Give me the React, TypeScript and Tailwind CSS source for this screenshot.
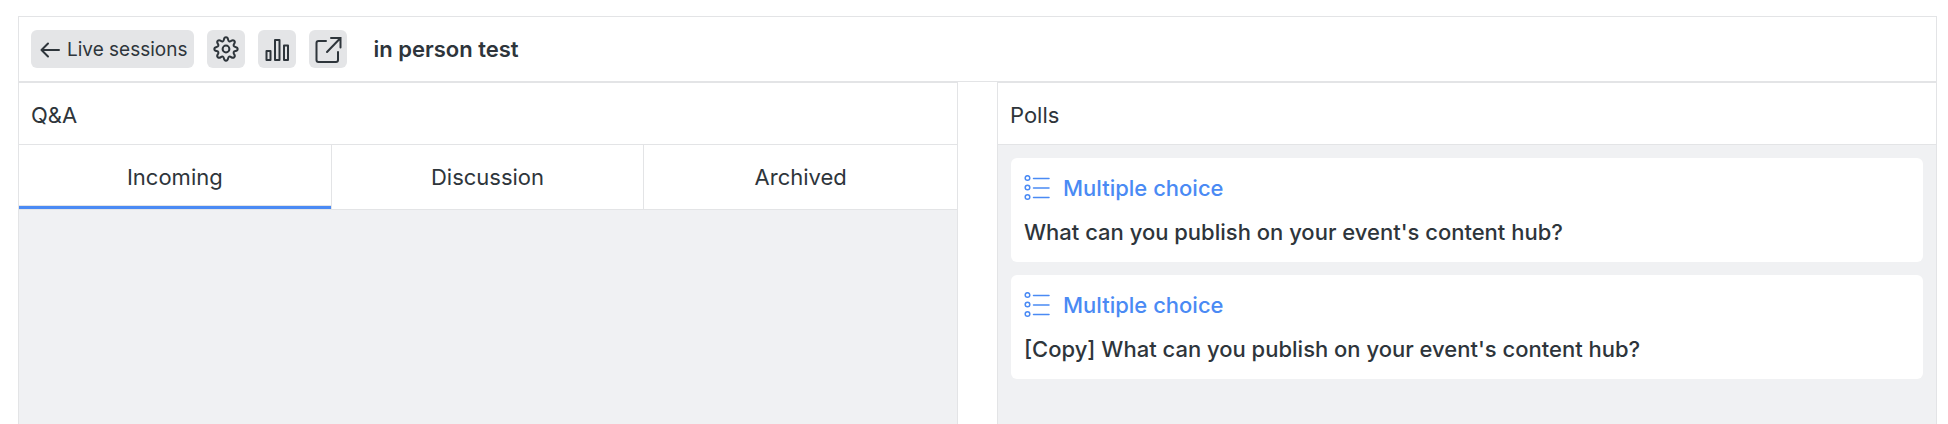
import type { ReactNode } from "react";

const tabs = ["Incoming", "Discussion", "Archived"];

const polls = [
  { type: "Multiple choice", question: "What can you publish on your event's content hub?" },
  { type: "Multiple choice", question: "[Copy] What can you publish on your event's content hub?" },
];

function ArrowLeftIcon() {
  return (
    <svg width="20" height="20" viewBox="0 0 20 20" fill="none" stroke="currentColor" strokeWidth="2" strokeLinecap="round" strokeLinejoin="round">
      <path d="M19 10H1.5M8 3.5 1.5 10 8 16.5" />
    </svg>
  );
}

function GearIcon() {
  return (
    <svg width="26" height="26" viewBox="0 0 26 26" fill="none" stroke="currentColor" strokeWidth="2" strokeLinejoin="round">
      <circle cx="13" cy="13" r="3.4" />
      <path d="M10.9 3.6C11.4 .6 14.6 .6 15.1 3.6C15.4 5.4 16.6 5.9 18.1 4.9C20.6 3.1 22.9 5.4 21.1 7.9C20.1 9.4 20.6 10.6 22.4 10.9C25.4 11.4 25.4 14.6 22.4 15.1C20.6 15.4 20.1 16.6 21.1 18.1C22.9 20.6 20.6 22.9 18.1 21.1C16.6 20.1 15.4 20.6 15.1 22.4C14.6 25.4 11.4 25.4 10.9 22.4C10.6 20.6 9.4 20.1 7.9 21.1C5.4 22.9 3.1 20.6 4.9 18.1C5.9 16.6 5.4 15.4 3.6 15.1C.6 14.6 .6 11.4 3.6 10.9C5.4 10.6 5.9 9.4 4.9 7.9C3.1 5.4 5.4 3.1 7.9 4.9C9.4 5.9 10.6 5.4 10.9 3.6Z" />
    </svg>
  );
}

function ChartIcon() {
  return (
    <svg width="26" height="26" viewBox="0 0 26 26" fill="none" stroke="currentColor" strokeWidth="2" strokeLinejoin="round">
      <path d="M2.5 15h4v9h-4zM11 4h4.500v20H11zM20 9.500h4V24h-4z" />
    </svg>
  );
}

function ExternalIcon() {
  return (
    <svg width="28" height="28" viewBox="0 0 28 28" fill="none" stroke="currentColor" strokeWidth="2" strokeLinecap="round">
      <path d="M12 6H4.5a2 2 0 0 0-2 2v17a2 2 0 0 0 2 2h17.500a2 2 0 0 0 2-2v-8M17 3h9.500v9.500M26 3.500 13 17" />
    </svg>
  );
}

function ChoiceIcon() {
  return (
    <svg width="26" height="26" viewBox="0 0 26 26" fill="none" stroke="currentColor" strokeWidth="1.5" strokeLinecap="round">
      <circle cx="3.5" cy="3" r="2.3" />
      <circle cx="3.5" cy="12.5" r="2.3" />
      <circle cx="3.5" cy="22" r="2.3" />
      <path d="M9.500 3.500H25M9.500 13H25M9.500 22.500H25" />
    </svg>
  );
}

function IconButton({ label, children }: { label: string; children: ReactNode }) {
  return (
    <button type="button" aria-label={label} className="flex size-[38px] items-center justify-center rounded-md bg-[#e4e5e7]">
      {children}
    </button>
  );
}

function Panel({ title, children }: { title: string; children: ReactNode }) {
  return (
    <section className="flex flex-col border-x border-t border-[#e3e4e6] bg-[#f0f1f3]">
      <h2 className="border-b border-[#e3e4e6] bg-white px-3 pt-[18px] pb-[15px] text-[22px] leading-7">{title}</h2>
      {children}
    </section>
  );
}

export default function App() {
  return (
    <div className="flex min-h-screen flex-col bg-white pt-4 pr-[11px] pl-[18px] font-['Inter',sans-serif] text-[#2e353b]">
      <header className="flex items-center gap-[13px] border border-[#e3e4e6] px-3 py-[13px]">
        <a href="#sessions" className="flex h-[38px] items-center gap-[7px] rounded-md bg-[#e4e5e7] pt-0.5 pr-1.5 pl-[9px] text-[19px]">
          <ArrowLeftIcon />
          Live sessions
        </a>
        <IconButton label="Settings">
          <GearIcon />
        </IconButton>
        <IconButton label="Results">
          <ChartIcon />
        </IconButton>
        <IconButton label="Open in new window">
          <ExternalIcon />
        </IconButton>
        <h1 className="ml-3.5 text-[22px] leading-7 font-semibold">in person test</h1>
      </header>

      <main className="grid flex-1 grid-cols-2 gap-[39px]">
        <Panel title="Q&A">
          <div role="tablist" className="grid grid-cols-3 border-b border-[#e3e4e6] bg-white">
            {tabs.map((tab, index) => (
              <div key={tab} className="flex border-r border-[#e3e4e6] last:border-r-0">
                <button
                  type="button"
                  role="tab"
                  aria-selected={index === 0}
                  className="h-16 flex-1 border-b-3 border-transparent pt-1 text-[22px] aria-selected:border-[#4a8af4] aria-selected:shadow-[inset_0_-1px_0_#e3e4e6]"
                >
                  {tab}
                </button>
              </div>
            ))}
          </div>
        </Panel>

        <Panel title="Polls">
          <ul className="flex flex-col gap-[13px] p-[13px]">
            {polls.map((poll) => (
              <li key={poll.question} className="rounded-md bg-white px-[13px] py-4">
                <div className="flex items-center gap-[13px] text-[22px] leading-7 font-medium text-[#4a8af4]">
                  <ChoiceIcon />
                  {poll.type}
                </div>
                <p className="mt-4 text-[22px] leading-7 font-medium">{poll.question}</p>
              </li>
            ))}
          </ul>
        </Panel>
      </main>
    </div>
  );
}
